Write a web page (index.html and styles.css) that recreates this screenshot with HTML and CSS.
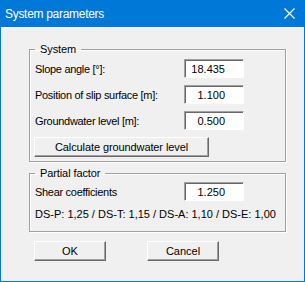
FILE: index.html
```html
<!DOCTYPE html>
<html lang="en">
<head>
  <meta charset="UTF-8">
  <meta name="viewport" content="width=device-width, initial-scale=1.0">
  <title>System parameters</title>
  <link rel="stylesheet" href="styles.css">
</head>
<body>
  <div class="window">
    <div class="titlebar">
      <span class="title">System parameters</span>
      <svg class="close" viewBox="0 0 11 11" width="11" height="11">
        <path d="M0.5 0.5 L10.5 10.5 M10.5 0.5 L0.5 10.5" stroke="#fff" stroke-width="1.1" fill="none"/>
      </svg>
    </div>
    <div class="dialog-body">
      <fieldset class="group">
        <legend>System</legend>
        <div class="row">
          <label class="label">Slope angle [°]:</label>
          <input class="field" type="text" value="18.435">
        </div>
        <div class="row">
          <label class="label">Position of slip surface [m]:</label>
          <input class="field" type="text" value="1.100">
        </div>
        <div class="row">
          <label class="label">Groundwater level [m]:</label>
          <input class="field" type="text" value="0.500">
        </div>
        <button class="btn calc">Calculate groundwater level</button>
      </fieldset>

      <fieldset class="group partial">
        <legend>Partial factor</legend>
        <div class="row">
          <label class="label">Shear coefficients</label>
          <input class="field" type="text" value="1.250">
        </div>
        <p class="note">DS-P: 1,25 / DS-T: 1,15 / DS-A: 1,10 / DS-E: 1,00</p>
      </fieldset>

      <div class="actions">
        <button class="btn">OK</button>
        <button class="btn">Cancel</button>
      </div>
    </div>
  </div>
</body>
</html>
```

FILE: styles.css
```css
body {
  margin: 0;
  background-color: #f0f0f0;
  font-family: "Liberation Sans", Arial, sans-serif;
  font-size: 11px;
  color: #000;
}

.window {
  box-sizing: border-box;
  width: 305px;
  height: 282px;
  border: 1px solid #0078d7;
  background-color: #f0f0f0;
}

/** Title bar **/

.titlebar {
  display: flex;
  justify-content: space-between;
  align-items: center;
  height: 26px;
  padding: 0 9px 0 4px;
  background-color: #0078d7;
  color: #fff;
}

.title {
  font-size: 12px;
  letter-spacing: -0.3px;
  line-height: 26px;
}

.close {
  display: block;
  margin-top: -1px;
}

/** Dialog body **/

.dialog-body {
  padding: 16px 18px 0 28px;
}

.group {
  margin: 0;
  padding: 3px 0 4px 5px;
  border: 1px solid #a0a0a0;
  box-shadow: 1px 1px 0 #fff, inset 1px 1px 0 #fff;
}

.group legend {
  padding: 0 5px;
  line-height: 13px;
  letter-spacing: -0.1px;
}

.group.partial {
  margin-top: 5px;
  padding-top: 2px;
  padding-bottom: 10px;
}

.row {
  display: flex;
  align-items: center;
  height: 19px;
  margin-bottom: 7px;
}

.label {
  width: 149px;
  letter-spacing: -0.3px;
}

.field {
  box-sizing: border-box;
  width: 60px;
  height: 19px;
  margin: 0;
  padding: 0 18px 0 0;
  border: 1px solid #fff;
  border-top-color: #a0a0a0;
  border-left-color: #a0a0a0;
  box-shadow: inset 1px 1px 0 #696969;
  background-color: #fff;
  font-family: inherit;
  font-size: 11px;
  text-align: right;
  color: #000;
  outline: none;
}

.note {
  margin: 7px 0 0;
  line-height: 13px;
}

/** Buttons **/

.btn {
  box-sizing: border-box;
  display: block;
  width: 72px;
  height: 20px;
  margin: 0;
  padding: 0;
  border: 1px solid #696969;
  border-top-color: #fff;
  border-left-color: #fff;
  box-shadow: inset -1px -1px 0 #a0a0a0;
  background-color: #f0f0f0;
  font-family: inherit;
  font-size: 11px;
  color: #000;
}

.btn.calc {
  width: 175px;
  margin: 3px 0 0 -1px;
  letter-spacing: -0.1px;
}

.actions {
  display: flex;
  gap: 41px;
  margin: 9px 0 0 5px;
}
```
